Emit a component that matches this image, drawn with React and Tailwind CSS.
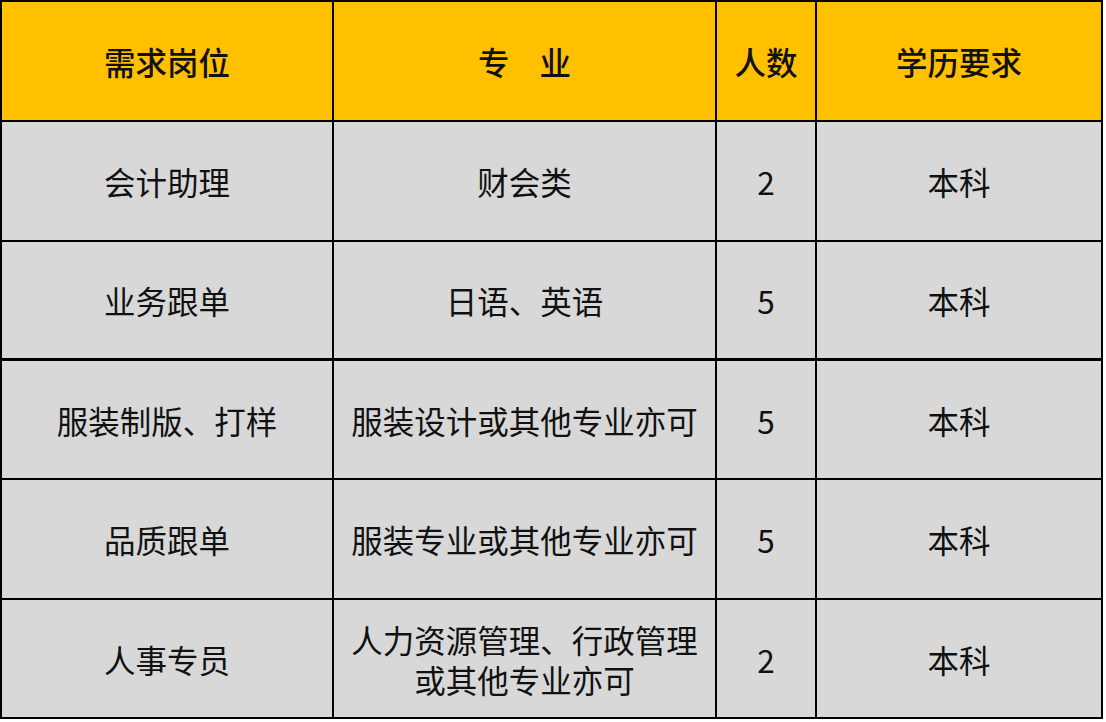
import React from "react";

const rows = [
  ["会计助理", ["财会类"], "2", "本科"],
  ["业务跟单", ["日语、英语"], "5", "本科"],
  ["服装制版、打样", ["服装设计或其他专业亦可"], "5", "本科"],
  ["品质跟单", ["服装专业或其他专业亦可"], "5", "本科"],
  ["人事专员", ["人力资源管理、行政管理", "或其他专业亦可"], "2", "本科"],
];

const font = {
  fontFamily: '"Noto Sans CJK SC", "Noto Sans", sans-serif',
};

function Cell({ children, head }) {
  return (
    <div
      className={`flex flex-col items-center justify-center text-center text-[31.5px] leading-[40px] text-[#111] ${
        head ? "bg-[#ffc000] font-medium" : "bg-[#d8d8d8]"
      }`}
    >
      {children}
    </div>
  );
}

export default function App() {
  return (
    <div className="w-[1106px] h-[722px] bg-white" style={font}>
      <div className="w-[1103px] bg-black p-[2px] grid grid-cols-[330px_381px_98px_284px] gap-x-[2px]">
        <div className="col-span-4 grid grid-cols-[330px_381px_98px_284px] gap-x-[2px] h-[118px]">
          <Cell head>需求岗位</Cell>
          <Cell head>
            <span className="tracking-[30px] pl-[30px]">专业</span>
          </Cell>
          <Cell head>人数</Cell>
          <Cell head>学历要求</Cell>
        </div>
        {rows.map((r, i) => (
          <div
            key={i}
            className={`col-span-4 grid grid-cols-[330px_381px_98px_284px] gap-x-[2px] ${
              i === 2 ? "mt-[3px] h-[117px]" : i === 1 ? "mt-[2px] h-[116px]" : i === 4 ? "mt-[2px] h-[117px]" : "mt-[2px] h-[118px]"
            }`}
          >
            <Cell>{r[0]}</Cell>
            <Cell>
              {r[1].map((t, j) => (
                <span key={j}>{t}</span>
              ))}
            </Cell>
            <Cell>{r[2]}</Cell>
            <Cell>{r[3]}</Cell>
          </div>
        ))}
      </div>
    </div>
  );
}
